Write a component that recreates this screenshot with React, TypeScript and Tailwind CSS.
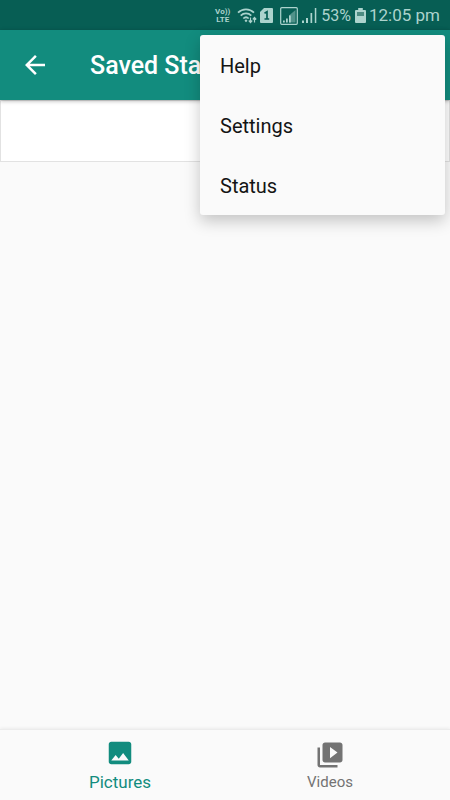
import { useState } from "react";

const menuItems = ["Help", "Settings", "Status"];

function StatusBar() {
  return (
    <div className="flex h-[30px] items-center justify-end bg-[#075e54] pt-px pr-[10px] text-[#acd3cd]">
      <div className="mr-[7px] text-center text-[8px] leading-[8px] font-bold">
        <p>Vo))</p>
        <p>LTE</p>
      </div>
      <svg className="mr-[2px] h-4 w-[21px]" viewBox="0 0 21 16" fill="none" stroke="currentColor">
        <path d="M1 4.600C5.500.2 12.500.2 17 4.600" strokeWidth="1.700" />
        <path d="M3.700 7.600c3-2.900 7.600-2.900 10.600 0" strokeWidth="1.700" />
        <path d="M6.300 10.500c1.600-1.500 3.800-1.500 5.400 0" strokeWidth="1.700" />
        <path d="M9 11.200l1.500 1.500L9 14.300l-1.500-1.600z" fill="currentColor" stroke="none" />
        <path d="M13.500 9.500v5M11.800 12.500l1.700 2 1.700-2M17.500 14.500v-5M15.800 11.500l1.700-2 1.700 2" strokeWidth="1.200" />
      </svg>
      <svg className="mr-[7px] h-[15px] w-[13px]" viewBox="0 0 13 15">
        <path d="M4 0h8a1 1 0 0 1 1 1v13a1 1 0 0 1-1 1H1a1 1 0 0 1-1-1V4z" fill="currentColor" />
        <path d="M4.500 5.200L7 3.800v7.400M4.500 11h4.700" fill="none" stroke="#075e54" strokeWidth="1.700" />
      </svg>
      <svg className="mr-1 h-[18px] w-[18px]" viewBox="0 0 18 18">
        <rect x=".7" y=".7" width="16.600" height="16.600" rx="1" fill="none" stroke="currentColor" strokeWidth="1.200" />
        <path d="M9 15.500V8.500l6.500-5.500v12.500z" fill="currentColor" opacity=".45" />
        <path d="M3 15.500v-2h1.800v2zM6 15.500v-4h1.800v4zM9 15.500v-7h1.800v7z" fill="currentColor" />
      </svg>
      <svg className="mr-1 h-[15px] w-[15px]" viewBox="0 0 15 15" fill="currentColor">
        <path d="M0 15v-2.500h2V15zM4 15v-5h2v5zM8.500 15V5h1.700v10zM12.800 15V0h1.500v15z" />
      </svg>
      <span className="mr-1 text-base">53%</span>
      <svg className="mr-[3px] h-[15px] w-[11px]" viewBox="0 0 11 15">
        <path d="M3.200 0h4.600v2H10a1 1 0 0 1 1 1v11a1 1 0 0 1-1 1H1a1 1 0 0 1-1-1V3a1 1 0 0 1 1-1h2.200z" fill="currentColor" />
        <path d="M2 4h7v4H2z" fill="#4c8b81" />
      </svg>
      <span className="text-[17px]">12:05 pm</span>
    </div>
  );
}

function OverflowMenu() {
  return (
    <div
      role="menu"
      className="absolute top-[35px] right-[5px] z-20 w-[245px] rounded-[3px] bg-[#fafafa] shadow-[0_6px_16px_rgba(0,0,0,0.22)]"
    >
      {menuItems.map((item) => (
        <button
          key={item}
          role="menuitem"
          className="block h-[60px] w-full px-5 pt-0.5 text-left text-xl text-[#141414]"
        >
          {item}
        </button>
      ))}
    </div>
  );
}

export default function App() {
  const [tab, setTab] = useState("pictures");

  const tabClass = (name: string) =>
    name === tab
      ? "flex flex-1 flex-col items-center pt-2 text-[17px] leading-7 text-[#128c7e]"
      : "flex flex-1 flex-col items-center pt-[10px] text-[15px] leading-6 text-[#737373]";

  return (
    <div className="relative flex min-h-screen flex-col bg-[#fafafa] font-['Roboto','Liberation_Sans',sans-serif]">
      <StatusBar />
      <header className="z-10 flex h-[70px] items-center bg-[#128c7e] pl-5 text-white shadow-[0_1px_4px_rgba(0,0,0,0.3)]">
        <button aria-label="Back" className="mr-10">
          <svg className="h-[30px] w-[30px]" viewBox="0 0 24 24" fill="currentColor">
            <path d="M20 11H7.830l5.590-5.590L12 4l-8 8 8 8 1.410-1.410L7.830 13H20v-2z" />
          </svg>
        </button>
        <h1 className="pt-0.5 text-[25px] font-medium whitespace-nowrap">Saved Sta</h1>
      </header>

      <main className="flex-1">
        <div className="h-[62px] border border-[#e2e2e2] bg-white" />
      </main>

      <nav className="flex h-[71px] border-t border-[#ececec] bg-[#fafafa] px-[15px] shadow-[0_-1px_3px_rgba(0,0,0,0.06)]">
        <button className={tabClass("pictures")} onClick={() => setTab("pictures")}>
          <svg className="h-[30px] w-[30px]" viewBox="0 0 24 24" fill="currentColor">
            <path d="M21 19V5c0-1.100-.9-2-2-2H5c-1.100 0-2 .9-2 2v14c0 1.100.9 2 2 2h14c1.100 0 2-.9 2-2zM8.500 13.500l2.500 3.010L14.500 12l4.500 6H5l3.500-4.500z" />
          </svg>
          Pictures
        </button>
        <button className={tabClass("videos")} onClick={() => setTab("videos")}>
          <svg className="h-[30px] w-[30px]" viewBox="0 0 24 24" fill="currentColor">
            <path d="M4 6H2v14c0 1.100.9 2 2 2h14v-2H4V6zm16-4H8c-1.100 0-2 .9-2 2v12c0 1.100.9 2 2 2h12c1.100 0 2-.9 2-2V4c0-1.100-.9-2-2-2zm-8 12.500v-9l6 4.500-6 4.500z" />
          </svg>
          Videos
        </button>
      </nav>

      <OverflowMenu />
    </div>
  );
}
